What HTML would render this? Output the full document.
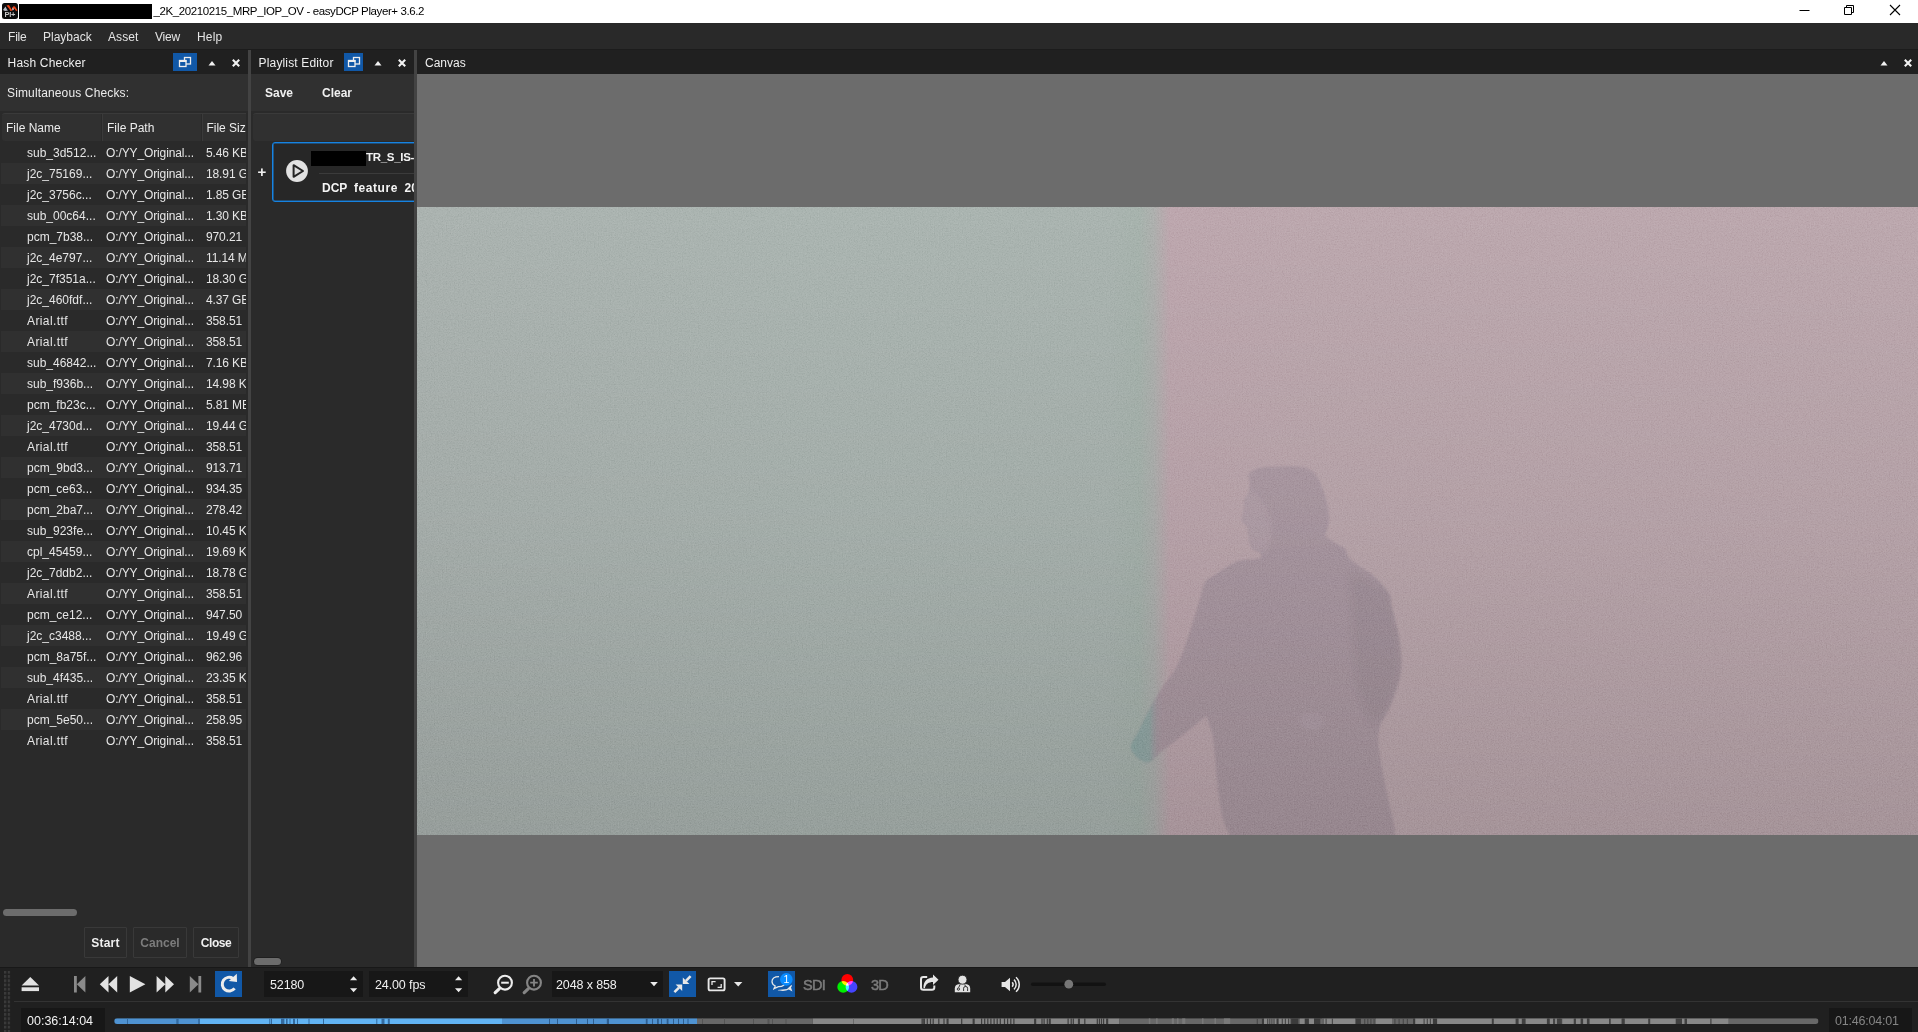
<!DOCTYPE html>
<html lang="en"><head><meta charset="utf-8"><title>easyDCP Player+ 3.6.2</title>
<style>
*{box-sizing:border-box;margin:0;padding:0}
html,body{width:1918px;height:1032px;overflow:hidden;background:#2a2a2a}
body{position:relative;font-family:"Liberation Sans",sans-serif;font-size:12px;color:#e8e8e8;line-height:1}
.abs,.abs *{position:absolute}
div,span,svg{position:absolute}
#title{left:0;top:0;width:1918px;height:23px;background:#fff}
#title .ttl{left:153.4px;top:5.5px;font-size:11.5px;color:#000;white-space:nowrap;letter-spacing:-0.39px}
#title .redact{left:19px;top:4px;width:132.5px;height:15px;background:#000}
#menu{left:0;top:23px;width:1918px;height:27px;background:#292929;border-bottom:1px solid #1c1c1c}
#menu span{top:8px;font-size:12px;color:#e4e4e4;white-space:nowrap}
.dockhead{top:50px;height:24px;background:#202020}
.dockhead .t{top:7px;font-size:12px;color:#efefef;white-space:nowrap}
.bluebtn{background:#1158a7}
.split{background:#434343}
#left{left:0;top:74px;width:248px;height:893px;background:#2a2a2a;overflow:hidden}
#left .top{left:0;top:0;width:248px;height:37px;background:#303030}
.row{left:1px;width:245.4px;height:21px;overflow:hidden;white-space:nowrap;font-size:12px;color:#e6e6e6}
.row.alt{background:#303030}
.row span{top:5px}
.row .c1{left:26px}.row .c2{left:105px;letter-spacing:-0.12px}.row .c3{left:205px;letter-spacing:-0.12px}
#lefttop{left:0;top:74px;width:248px;height:37px;background:#303030}
#lefttop span{left:7px;top:13px;letter-spacing:0.14px;font-size:12px;color:#ececec;white-space:nowrap}
#lhead{left:2px;top:113px;width:244px;height:28px;background:#303030;border-top:1px solid #3a3a3a;border-radius:3px 0 0 3px;overflow:hidden;white-space:nowrap}
#lhead span{top:8px;font-size:12px;color:#ececec}
#lhead i{position:absolute;top:-1px;width:2px;height:28px;background:#2a2a2a;border-right:1px solid #3a3a3a}
.hscroll{background:#6c6c6c;border-radius:4px}
.btn{border:1px solid #393939;border-radius:1px}
.btn span{left:0;right:0;top:9px;text-align:center;font-weight:bold;font-size:12px;color:#f0f0f0}
.btn.dis span{color:#7c7c7c}
#pltop{left:251px;top:74px;width:162.5px;height:37px;background:#303030}
#pltop span{top:13px;font-weight:bold;font-size:12px;color:#f0f0f0}
#plhead{left:253px;top:113px;width:160.5px;height:28px;background:#303030;border-top:1px solid #3a3a3a;border-radius:3px 0 0 3px}
#plclip{left:251px;top:111px;width:162.5px;height:840px;overflow:hidden}
#plclip .plus{left:6.6px;top:52.5px;font-weight:bold;font-size:15px;color:#f0f0f0}
.card{left:21px;top:31px;width:200px;height:60px;border:1px solid #1683e2;box-shadow:inset 0 0 0 0.6px rgba(22,131,226,0.85);border-radius:3px;background:#272727}
.card .redact2{left:38px;top:8px;width:55px;height:15px;background:#000}
.card .l1{left:93px;top:9px;font-weight:bold;font-size:11.5px;color:#f4f4f4;white-space:nowrap;letter-spacing:-0.3px}
.card .sep{left:46px;top:29.5px;width:200px;height:1px;background:#3b3b3b}
.card .l2{left:49px;top:39px;font-weight:bold;font-size:12px;color:#f4f4f4;white-space:nowrap}
#canvas{left:417px;top:74px;width:1501px;height:893px;background:#6c6c6c;overflow:hidden}
#frame{left:0;top:133px;width:1501px;height:628px;overflow:hidden;
  background:linear-gradient(90deg,#abb3b0 0px,#abb5b1 400px,#aab4b0 690px,#a7b3ad 722px,#aeb0ae 737px,#bda7ae 753px,#bca8ae 900px,#bca8ae 1501px)}
#frame .shade{left:0;top:0;width:1501px;height:628px;background:linear-gradient(180deg,rgba(0,0,0,0) 0%,rgba(0,0,0,0.045) 50%,rgba(0,0,0,0.118) 100%)}
#tb{left:0;top:967px;width:1918px;height:65px;background:#202020;border-top:1px solid #181818}
#tb>*{margin-top:-1px}
.box{background:#171717}
.box span{left:6px;top:8px;font-size:12.5px;letter-spacing:-0.12px;color:#f0f0f0;white-space:nowrap}
#tb .badge{left:783.4px;top:7px;font-size:10.5px;color:#fff}
#tb .dim{top:10.5px;font-size:14.5px;font-weight:normal;-webkit-text-stroke:0.5px #7c7c7c;color:#7c7c7c;letter-spacing:-0.7px}
#tb .hr{left:14px;top:34px;width:1904px;height:1px;background:#333}
#tb .tc{top:41px;height:24px;background:#171717}
#tb .tc span{top:7px;font-size:12.5px;white-space:nowrap}

</style></head>
<body>
<!-- ===== Title bar ===== -->
<div id="title">
  <svg style="left:2px;top:3px" width="16" height="16" viewBox="0 0 16 16">
    <rect x="0" y="0" width="16" height="16" rx="2.5" fill="#0c0c0c"/>
    <path d="M1 7 L3.5 3.5 L5 6.5 L6 7.5 L3 8 Z" fill="#b9bcc6"/>
    <path d="M4.5 2.5 L7 2 L9 5.5 L10.5 7.5 L8.5 8 L7 5.5 Z" fill="#f04316"/>
    <path d="M10 5 L11.5 3.2 L13 3.5 L15.5 7.5 L14 8 L12.5 5.5 L11 7 Z" fill="#f04316"/>
    <path d="M10 6 L11 4.5 L11.8 6.5 L10.8 7.5 Z" fill="#b9c6d6"/>
    <text x="2.6" y="14.2" font-family="Liberation Sans, sans-serif" font-size="7.5" font-weight="bold" fill="#c8c8c8" letter-spacing="-0.4">Pl+</text>
  </svg>
  <div class="redact"></div>
  <span class="ttl">_2K_20210215_MRP_IOP_OV - easyDCP Player+ 3.6.2</span>
  <svg style="left:1790px;top:0" width="128" height="23" viewBox="0 0 128 23">
    <path d="M9.5 10.5 H19.5" stroke="#000" stroke-width="1" fill="none"/>
    <path d="M54.5 7.5 H61.5 V14.5 H54.5 Z M56.5 7.5 V5.5 H63.5 V12.5 H61.5" stroke="#000" stroke-width="1" fill="none"/>
    <path d="M100 5 L110 15 M110 5 L100 15" stroke="#000" stroke-width="1.1" fill="none"/>
  </svg>
</div>

<!-- ===== Menu bar ===== -->
<div id="menu">
  <span style="left:8px;letter-spacing:-0.2px">File</span>
  <span style="left:43px">Playback</span>
  <span style="left:108px;letter-spacing:0.1px">Asset</span>
  <span style="left:155px;letter-spacing:-0.2px">View</span>
  <span style="left:197px;letter-spacing:0.2px">Help</span>
</div>

<!-- ===== Dock headers ===== -->
<div class="dockhead" style="left:0;width:248px">
  <span class="t" style="left:7.6px;letter-spacing:0.18px">Hash Checker</span>
  <div class="bluebtn" style="left:173px;top:3px;width:24px;height:18px"></div>
  <svg style="left:173px;top:3px" width="24" height="18" viewBox="0 0 24 18">
    <rect x="11.5" y="4.5" width="6" height="6.5" fill="none" stroke="#eee" stroke-width="1.3"/>
    <rect x="6.5" y="7.5" width="6.5" height="6" fill="#1158a7" stroke="#eee" stroke-width="1.3"/>
    <rect x="6" y="7" width="7.5" height="2" fill="#eee"/>
  </svg>
  <svg style="left:207px;top:9px" width="10" height="8" viewBox="0 0 10 8"><path d="M1.5 6.5 L5 2 L8.5 6.5 Z" fill="#f2f2f2"/></svg>
  <svg style="left:231px;top:8px" width="10" height="10" viewBox="0 0 10 10"><path d="M1.8 1.8 L8.2 8.2 M8.2 1.8 L1.8 8.2" stroke="#f2f2f2" stroke-width="2.1" fill="none"/></svg>
</div>
<div class="split" style="left:248px;top:50px;width:3px;height:917px"></div>
<div class="dockhead" style="left:251px;width:162.5px">
  <span class="t" style="left:7.6px;letter-spacing:0.15px">Playlist Editor</span>
  <div class="bluebtn" style="left:93px;top:3px;width:19px;height:18px"></div>
  <svg style="left:91px;top:3px" width="24" height="18" viewBox="0 0 24 18">
    <rect x="11.5" y="4.5" width="6" height="6.5" fill="none" stroke="#eee" stroke-width="1.3"/>
    <rect x="6.5" y="7.5" width="6.5" height="6" fill="#1158a7" stroke="#eee" stroke-width="1.3"/>
    <rect x="6" y="7" width="7.5" height="2" fill="#eee"/>
  </svg>
  <svg style="left:122px;top:9px" width="10" height="8" viewBox="0 0 10 8"><path d="M1.5 6.5 L5 2 L8.5 6.5 Z" fill="#f2f2f2"/></svg>
  <svg style="left:146px;top:8px" width="10" height="10" viewBox="0 0 10 10"><path d="M1.8 1.8 L8.2 8.2 M8.2 1.8 L1.8 8.2" stroke="#f2f2f2" stroke-width="2.1" fill="none"/></svg>
</div>
<div class="split" style="left:413.5px;top:50px;width:3.5px;height:917px"></div>
<div class="dockhead" style="left:417px;width:1501px">
  <span class="t" style="left:8px">Canvas</span>
  <svg style="left:1462px;top:9px" width="10" height="8" viewBox="0 0 10 8"><path d="M1.5 6.5 L5 2 L8.5 6.5 Z" fill="#f2f2f2"/></svg>
  <svg style="left:1486px;top:8px" width="10" height="10" viewBox="0 0 10 10"><path d="M1.8 1.8 L8.2 8.2 M8.2 1.8 L1.8 8.2" stroke="#f2f2f2" stroke-width="2.1" fill="none"/></svg>
</div>

<!-- ===== Hash Checker panel ===== -->
<div id="lefttop"><span>Simultaneous Checks:</span></div>
<div id="lhead">
  <span style="left:4px">File Name</span>
  <i style="left:99px"></i>
  <span style="left:105px">File Path</span>
  <i style="left:199px"></i>
  <span style="left:204.4px">File Size</span>
</div>
<div class="row" style="top:142px"><span class="c1">sub_3d512...</span><span class="c2">O:/YY_Original...</span><span class="c3">5.46 KB</span></div>
<div class="row alt" style="top:163px"><span class="c1">j2c_75169...</span><span class="c2">O:/YY_Original...</span><span class="c3">18.91 GB</span></div>
<div class="row" style="top:184px"><span class="c1">j2c_3756c...</span><span class="c2">O:/YY_Original...</span><span class="c3">1.85 GB</span></div>
<div class="row alt" style="top:205px"><span class="c1">sub_00c64...</span><span class="c2">O:/YY_Original...</span><span class="c3">1.30 KB</span></div>
<div class="row" style="top:226px"><span class="c1">pcm_7b38...</span><span class="c2">O:/YY_Original...</span><span class="c3">970.21 MB</span></div>
<div class="row alt" style="top:247px"><span class="c1">j2c_4e797...</span><span class="c2">O:/YY_Original...</span><span class="c3">11.14 MB</span></div>
<div class="row" style="top:268px"><span class="c1">j2c_7f351a...</span><span class="c2">O:/YY_Original...</span><span class="c3">18.30 GB</span></div>
<div class="row alt" style="top:289px"><span class="c1">j2c_460fdf...</span><span class="c2">O:/YY_Original...</span><span class="c3">4.37 GB</span></div>
<div class="row" style="top:310px"><span class="c1" style="letter-spacing:0.4px">Arial.ttf</span><span class="c2">O:/YY_Original...</span><span class="c3">358.51 KB</span></div>
<div class="row alt" style="top:331px"><span class="c1" style="letter-spacing:0.4px">Arial.ttf</span><span class="c2">O:/YY_Original...</span><span class="c3">358.51 KB</span></div>
<div class="row" style="top:352px"><span class="c1">sub_46842...</span><span class="c2">O:/YY_Original...</span><span class="c3">7.16 KB</span></div>
<div class="row alt" style="top:373px"><span class="c1">sub_f936b...</span><span class="c2">O:/YY_Original...</span><span class="c3">14.98 KB</span></div>
<div class="row" style="top:394px"><span class="c1">pcm_fb23c...</span><span class="c2">O:/YY_Original...</span><span class="c3">5.81 MB</span></div>
<div class="row alt" style="top:415px"><span class="c1">j2c_4730d...</span><span class="c2">O:/YY_Original...</span><span class="c3">19.44 GB</span></div>
<div class="row" style="top:436px"><span class="c1" style="letter-spacing:0.4px">Arial.ttf</span><span class="c2">O:/YY_Original...</span><span class="c3">358.51 KB</span></div>
<div class="row alt" style="top:457px"><span class="c1">pcm_9bd3...</span><span class="c2">O:/YY_Original...</span><span class="c3">913.71 MB</span></div>
<div class="row" style="top:478px"><span class="c1">pcm_ce63...</span><span class="c2">O:/YY_Original...</span><span class="c3">934.35 MB</span></div>
<div class="row alt" style="top:499px"><span class="c1">pcm_2ba7...</span><span class="c2">O:/YY_Original...</span><span class="c3">278.42 MB</span></div>
<div class="row" style="top:520px"><span class="c1">sub_923fe...</span><span class="c2">O:/YY_Original...</span><span class="c3">10.45 KB</span></div>
<div class="row alt" style="top:541px"><span class="c1">cpl_45459...</span><span class="c2">O:/YY_Original...</span><span class="c3">19.69 KB</span></div>
<div class="row" style="top:562px"><span class="c1">j2c_7ddb2...</span><span class="c2">O:/YY_Original...</span><span class="c3">18.78 GB</span></div>
<div class="row alt" style="top:583px"><span class="c1" style="letter-spacing:0.4px">Arial.ttf</span><span class="c2">O:/YY_Original...</span><span class="c3">358.51 KB</span></div>
<div class="row" style="top:604px"><span class="c1">pcm_ce12...</span><span class="c2">O:/YY_Original...</span><span class="c3">947.50 MB</span></div>
<div class="row alt" style="top:625px"><span class="c1">j2c_c3488...</span><span class="c2">O:/YY_Original...</span><span class="c3">19.49 GB</span></div>
<div class="row" style="top:646px"><span class="c1">pcm_8a75f...</span><span class="c2">O:/YY_Original...</span><span class="c3">962.96 MB</span></div>
<div class="row alt" style="top:667px"><span class="c1">sub_4f435...</span><span class="c2">O:/YY_Original...</span><span class="c3">23.35 KB</span></div>
<div class="row" style="top:688px"><span class="c1" style="letter-spacing:0.4px">Arial.ttf</span><span class="c2">O:/YY_Original...</span><span class="c3">358.51 KB</span></div>
<div class="row alt" style="top:709px"><span class="c1">pcm_5e50...</span><span class="c2">O:/YY_Original...</span><span class="c3">258.95 MB</span></div>
<div class="row" style="top:730px"><span class="c1" style="letter-spacing:0.4px">Arial.ttf</span><span class="c2">O:/YY_Original...</span><span class="c3">358.51 KB</span></div>
<div class="hscroll" style="left:3px;top:908.6px;width:74px;height:7px"></div>
<div class="btn" style="left:84px;top:927px;width:43px;height:31px"><span style="letter-spacing:0.2px">Start</span></div>
<div class="btn dis" style="left:133px;top:927px;width:54px;height:31px"><span>Cancel</span></div>
<div class="btn" style="left:193px;top:927px;width:46px;height:31px"><span style="letter-spacing:-0.45px">Close</span></div>

<!-- ===== Playlist Editor panel ===== -->
<div id="pltop">
  <span style="left:14px">Save</span>
  <span style="left:71px">Clear</span>
</div>
<div id="plhead"></div>
<div id="plclip">
  <span class="plus">+</span>
  <div class="card">
    <svg style="left:11.5px;top:15.6px" width="24" height="24" viewBox="0 0 24 24">
      <circle cx="12" cy="12" r="10.9" fill="#e2e2e2"/>
      <path d="M8.6 6.2 L8.6 17.8 L18 12 Z" fill="#dcdcdc" stroke="#242424" stroke-width="2" stroke-linejoin="round"/>
    </svg>
    <div class="redact2"></div>
    <span class="l1">TR_S_IS-1_2K_20210215_MRP_IOP_OV</span>
    <div class="sep"></div>
    <span class="l2">DCP&nbsp; <span style="position:static;letter-spacing:0.55px">feature</span>&nbsp; 2048 x 858&nbsp; 24.00 fps</span>
  </div>
</div>
<div class="hscroll" style="left:253.6px;top:957.5px;width:27.5px;height:7px;box-shadow:0 0 0 0.7px #1c1c1c"></div>

<!-- ===== Canvas ===== -->
<div id="canvas">
  <div id="frame">
    <svg style="left:0;top:0" width="1501" height="628" viewBox="0 0 1501 628"><defs><filter id="fb" x="-10%" y="-10%" width="120%" height="120%"><feGaussianBlur stdDeviation="1.3"/></filter><filter id="fb2" x="-20%" y="-20%" width="140%" height="140%"><feGaussianBlur stdDeviation="5"/></filter><filter id="fb3" x="-20%" y="-20%" width="140%" height="140%"><feGaussianBlur stdDeviation="1.6"/></filter><linearGradient id="fg" x1="0" y1="0" x2="0" y2="1"><stop offset="0" stop-color="#ad9ba5"/><stop offset="0.35" stop-color="#ab99a3"/><stop offset="1" stop-color="#ab99a2"/></linearGradient><linearGradient id="hg" gradientUnits="userSpaceOnUse" x1="716" y1="0" x2="746" y2="0"><stop offset="0" stop-color="#90a9a6"/><stop offset="0.55" stop-color="#94a8a6"/><stop offset="1" stop-color="#ab99a3" stop-opacity="0"/></linearGradient><clipPath id="fc"><path d="M831.6 267.7 C832.5 266.1 835.0 264.0 837.4 262.8 C839.7 261.5 841.5 260.8 845.6 260.3 C849.8 259.7 856.6 259.7 862.1 259.5 C867.6 259.3 874.2 258.9 878.6 259.2 C883.0 259.4 885.5 259.8 888.5 260.8 C891.5 261.8 894.5 263.3 896.7 265.3 C898.9 267.2 900.1 269.8 901.7 272.7 C903.2 275.5 904.5 279.3 905.8 282.5 C907.0 285.8 908.2 289.1 909.1 292.4 C910.0 295.7 910.7 298.5 911.2 302.3 C911.7 306.2 912.1 311.9 911.9 315.5 C911.6 319.1 910.5 321.6 909.9 323.8 C909.3 326.0 907.7 327.2 908.2 328.7 C908.8 330.2 911.3 331.4 913.2 332.8 C915.1 334.2 917.6 335.7 919.8 336.9 C922.0 338.2 924.7 338.9 926.4 340.2 C928.0 341.6 928.7 343.4 929.6 345.2 C930.6 346.9 930.2 348.7 932.1 350.9 C934.1 353.1 937.2 355.5 941.2 358.3 C945.2 361.2 952.2 365.2 956.0 368.2 C959.9 371.2 961.9 374.0 964.3 376.5 C966.6 379.0 968.4 380.6 970.0 383.1 C971.7 385.5 973.4 388.8 974.2 391.3 C974.9 393.7 973.3 391.8 974.5 397.8 C975.8 403.7 979.8 417.5 981.5 426.8 C983.2 436.2 984.5 446.2 984.6 454.0 C984.7 461.7 984.2 465.6 982.3 473.4 C980.4 481.1 976.2 492.7 973.0 500.5 C969.8 508.3 964.7 512.8 962.9 519.9 C961.1 527.0 961.1 532.8 962.1 543.1 C963.2 553.5 966.7 569.6 969.1 581.9 C971.6 594.2 975.3 608.4 976.9 616.8 C978.4 625.2 978.2 629.7 978.4 632.3 C978.7 634.9 1005.7 632.3 978.4 632.3 C951.1 632.3 842.1 632.3 814.8 632.3 C787.5 632.3 816.2 635.5 814.8 632.3 C813.4 629.1 808.6 621.3 806.3 612.9 C804.0 604.5 802.1 591.6 800.9 581.9 C799.6 572.2 799.4 563.8 798.5 554.8 C797.6 545.7 797.0 535.3 795.4 527.6 C793.9 520.0 790.3 512.1 789.2 509.0 C788.2 505.9 794.0 505.2 789.2 509.0 C784.4 512.9 767.9 526.5 760.5 532.3 C753.2 538.1 750.2 540.0 745.0 543.9 C739.9 547.8 734.7 555.9 729.5 555.6 C724.4 555.2 715.3 547.3 714.0 542.0 C712.7 536.7 718.5 530.7 721.8 523.8 C725.0 516.9 729.5 507.6 733.4 500.5 C737.3 493.4 740.5 488.2 745.0 481.1 C749.6 474.0 756.0 466.9 760.5 457.9 C765.1 448.8 768.6 437.2 772.2 426.8 C775.7 416.5 779.2 404.4 781.9 395.8 C784.5 387.2 785.6 379.6 788.0 375.1 C790.4 370.7 793.5 371.0 796.2 369.0 C798.9 367.1 801.7 365.4 804.4 363.6 C807.2 361.8 809.7 360.0 812.7 358.3 C815.7 356.7 818.2 354.8 822.6 353.7 C827.0 352.6 835.5 352.3 839.0 351.7 C842.6 351.1 843.4 351.2 844.0 350.1 C844.6 349.1 843.6 346.6 842.7 345.5 C841.7 344.4 839.7 344.4 838.2 343.5 C836.8 342.7 835.1 341.7 834.1 340.2 C833.2 338.7 833.0 336.4 832.5 334.5 C832.0 332.5 831.4 330.5 831.1 328.7 C830.9 326.9 831.0 325.3 830.8 323.8 C830.6 322.2 830.7 320.5 830.0 319.1 C829.2 317.8 827.0 316.8 826.2 315.5 C825.4 314.2 825.0 313.0 825.0 311.4 C825.0 309.7 825.9 307.7 826.2 305.6 C826.6 303.6 827.0 301.2 827.2 299.0 C827.4 296.8 826.9 294.4 827.5 292.4 C828.1 290.5 830.0 289.4 830.8 287.5 C831.6 285.6 832.2 283.4 832.5 280.9 C832.7 278.4 832.6 274.9 832.5 272.7 C832.3 270.5 830.8 269.3 831.6 267.7 Z"/></clipPath></defs><g filter="url(#fb)"><path d="M831.6 267.7 C832.5 266.1 835.0 264.0 837.4 262.8 C839.7 261.5 841.5 260.8 845.6 260.3 C849.8 259.7 856.6 259.7 862.1 259.5 C867.6 259.3 874.2 258.9 878.6 259.2 C883.0 259.4 885.5 259.8 888.5 260.8 C891.5 261.8 894.5 263.3 896.7 265.3 C898.9 267.2 900.1 269.8 901.7 272.7 C903.2 275.5 904.5 279.3 905.8 282.5 C907.0 285.8 908.2 289.1 909.1 292.4 C910.0 295.7 910.7 298.5 911.2 302.3 C911.7 306.2 912.1 311.9 911.9 315.5 C911.6 319.1 910.5 321.6 909.9 323.8 C909.3 326.0 907.7 327.2 908.2 328.7 C908.8 330.2 911.3 331.4 913.2 332.8 C915.1 334.2 917.6 335.7 919.8 336.9 C922.0 338.2 924.7 338.9 926.4 340.2 C928.0 341.6 928.7 343.4 929.6 345.2 C930.6 346.9 930.2 348.7 932.1 350.9 C934.1 353.1 937.2 355.5 941.2 358.3 C945.2 361.2 952.2 365.2 956.0 368.2 C959.9 371.2 961.9 374.0 964.3 376.5 C966.6 379.0 968.4 380.6 970.0 383.1 C971.7 385.5 973.4 388.8 974.2 391.3 C974.9 393.7 973.3 391.8 974.5 397.8 C975.8 403.7 979.8 417.5 981.5 426.8 C983.2 436.2 984.5 446.2 984.6 454.0 C984.7 461.7 984.2 465.6 982.3 473.4 C980.4 481.1 976.2 492.7 973.0 500.5 C969.8 508.3 964.7 512.8 962.9 519.9 C961.1 527.0 961.1 532.8 962.1 543.1 C963.2 553.5 966.7 569.6 969.1 581.9 C971.6 594.2 975.3 608.4 976.9 616.8 C978.4 625.2 978.2 629.7 978.4 632.3 C978.7 634.9 1005.7 632.3 978.4 632.3 C951.1 632.3 842.1 632.3 814.8 632.3 C787.5 632.3 816.2 635.5 814.8 632.3 C813.4 629.1 808.6 621.3 806.3 612.9 C804.0 604.5 802.1 591.6 800.9 581.9 C799.6 572.2 799.4 563.8 798.5 554.8 C797.6 545.7 797.0 535.3 795.4 527.6 C793.9 520.0 790.3 512.1 789.2 509.0 C788.2 505.9 794.0 505.2 789.2 509.0 C784.4 512.9 767.9 526.5 760.5 532.3 C753.2 538.1 750.2 540.0 745.0 543.9 C739.9 547.8 734.7 555.9 729.5 555.6 C724.4 555.2 715.3 547.3 714.0 542.0 C712.7 536.7 718.5 530.7 721.8 523.8 C725.0 516.9 729.5 507.6 733.4 500.5 C737.3 493.4 740.5 488.2 745.0 481.1 C749.6 474.0 756.0 466.9 760.5 457.9 C765.1 448.8 768.6 437.2 772.2 426.8 C775.7 416.5 779.2 404.4 781.9 395.8 C784.5 387.2 785.6 379.6 788.0 375.1 C790.4 370.7 793.5 371.0 796.2 369.0 C798.9 367.1 801.7 365.4 804.4 363.6 C807.2 361.8 809.7 360.0 812.7 358.3 C815.7 356.7 818.2 354.8 822.6 353.7 C827.0 352.6 835.5 352.3 839.0 351.7 C842.6 351.1 843.4 351.2 844.0 350.1 C844.6 349.1 843.6 346.6 842.7 345.5 C841.7 344.4 839.7 344.4 838.2 343.5 C836.8 342.7 835.1 341.7 834.1 340.2 C833.2 338.7 833.0 336.4 832.5 334.5 C832.0 332.5 831.4 330.5 831.1 328.7 C830.9 326.9 831.0 325.3 830.8 323.8 C830.6 322.2 830.7 320.5 830.0 319.1 C829.2 317.8 827.0 316.8 826.2 315.5 C825.4 314.2 825.0 313.0 825.0 311.4 C825.0 309.7 825.9 307.7 826.2 305.6 C826.6 303.6 827.0 301.2 827.2 299.0 C827.4 296.8 826.9 294.4 827.5 292.4 C828.1 290.5 830.0 289.4 830.8 287.5 C831.6 285.6 832.2 283.4 832.5 280.9 C832.7 278.4 832.6 274.9 832.5 272.7 C832.3 270.5 830.8 269.3 831.6 267.7 Z" fill="url(#fg)"/><g clip-path="url(#fc)"><rect x="700" y="480" width="48" height="90" fill="url(#hg)"/><path d="M832.5 281.7 L830.8 287.5 L827.5 292.4 L826.2 305.6 L825.0 311.4 L826.2 315.5 L830.0 319.1 L831.1 328.7 L834.1 340.2 L842.7 345.5 L851.4 341.9 L855.5 328.7 L854.2 315.5 L849.8 300.7 L841.5 288.3 Z" fill="#b7a5ad" opacity="0.5" filter="url(#fb3)"/><ellipse cx="849.7" cy="434.6" rx="45" ry="80" fill="#b2a0a8" opacity="0.0"/><path d="M931.1 360.9 L971.8 384.2 L983.5 434.6 L983.5 465.6 L969.9 504.4 L954.4 519.9 L938.9 481.1 L935.0 419.1 Z" fill="#000" opacity="0.035" filter="url(#fb2)"/><ellipse cx="894.3" cy="514.1" rx="12" ry="9" fill="#b8a7ae" opacity="0.35"/></g></g></svg>
    <div class="shade"></div>
    <svg style="left:0;top:0;mix-blend-mode:soft-light;opacity:0.24" width="1501" height="628" viewBox="0 0 1501 628">
      <defs><filter id="grain" x="0" y="0" width="100%" height="100%" color-interpolation-filters="sRGB">
        <feTurbulence type="fractalNoise" baseFrequency="0.75" numOctaves="2" seed="11" result="n"/>
        <feColorMatrix in="n" type="matrix" values="0.6 0.6 0.6 0 -0.4  0.6 0.6 0.6 0 -0.4  0.6 0.6 0.6 0 -0.4  0 0 0 0 1"/>
      </filter></defs>
      <rect x="0" y="0" width="1501" height="628" filter="url(#grain)"/>
    </svg>
  </div>
</div>

<!-- ===== Bottom toolbar ===== -->
<div id="tb">
  <svg id="grip" style="left:0;top:0" width="14" height="65" viewBox="0 967 14 65"><defs><pattern id="gp" x="3.9" y="970.9" width="3.9" height="4.22" patternUnits="userSpaceOnUse"><rect x="0" y="0" width="2.3" height="2.8" fill="#3b3b3b"/></pattern></defs><rect x="3.9" y="970.9" width="6.4" height="62" fill="url(#gp)"/></svg>
  <div class="box" style="left:264px;top:4px;width:99px;height:26px"><span>52180</span></div>
  <div class="box" style="left:369px;top:4px;width:99px;height:26px"><span>24.00 fps</span></div>
  <div class="box" style="left:552px;top:4px;width:111px;height:26px"><span style="left:4px">2048 x 858</span></div>
  <svg id="tbicons" style="left:0;top:0" width="1918" height="37" viewBox="0 967 1918 37">
    <!-- eject -->
    <path d="M21.6 985.6 L30.3 977 L39 985.6 Z" fill="#e2e2e2"/>
    <rect x="21.6" y="987.3" width="17.4" height="3.8" fill="#e2e2e2"/>
    <!-- skip to start -->
    <rect x="74" y="976" width="2.8" height="16.5" fill="#8a8a8a"/>
    <path d="M85.4 976 L85.4 992.5 L76.8 984.25 Z" fill="#8a8a8a"/>
    <!-- rewind -->
    <path d="M108.5 976 L108.5 992.5 L99.8 984.25 Z M117.2 976 L117.2 992.5 L108.5 984.25 Z" fill="#e2e2e2"/>
    <!-- play -->
    <path d="M129.8 976 L145.4 984.25 L129.8 992.5 Z" fill="#e2e2e2"/>
    <!-- ff -->
    <path d="M156.6 976 L165.3 984.25 L156.6 992.5 Z M165.3 976 L174 984.25 L165.3 992.5 Z" fill="#e2e2e2"/>
    <!-- skip to end -->
    <path d="M189.8 976 L198.4 984.25 L189.8 992.5 Z" fill="#8a8a8a"/>
    <rect x="198.4" y="976" width="2.8" height="16.5" fill="#8a8a8a"/>
    <!-- loop -->
    <rect x="215" y="971" width="27" height="26" fill="#1158a7"/>
    <path d="M234.6 988.4 A6.9 6.9 0 1 1 233 978.4" fill="none" stroke="#ececec" stroke-width="3"/>
    <path d="M228.8 981 L237 982 L236.8 973.8 Z" fill="#ececec"/>
    <!-- zoom out -->
    <circle cx="505" cy="982.7" r="6.9" fill="none" stroke="#ececec" stroke-width="2.1"/>
    <path d="M499.4 988.6 L495.2 992.6" stroke="#ececec" stroke-width="3.2" stroke-linecap="round"/>
    <path d="M501.2 982.7 H508.8" stroke="#ececec" stroke-width="2"/>
    <!-- zoom in (disabled) -->
    <circle cx="534" cy="982.7" r="6.9" fill="none" stroke="#858585" stroke-width="2.1"/>
    <path d="M528.4 988.6 L524.2 992.6" stroke="#858585" stroke-width="3.2" stroke-linecap="round"/>
    <path d="M530.2 982.7 H537.8 M534 978.9 V986.5" stroke="#858585" stroke-width="1.8"/>
    <!-- fit button -->
    <rect x="669" y="971" width="27" height="26" fill="#1158a7"/>
    <path d="M674.4 992.2 L679 987.6" stroke="#e8e8e8" stroke-width="2.6"/>
    <path d="M675.6 984.4 L682.2 984.4 L682.2 991 Z" fill="#e8e8e8"/>
    <path d="M690.6 976.2 L686 980.8" stroke="#e8e8e8" stroke-width="2.6"/>
    <path d="M682.8 977.4 L682.8 984 L689.4 984 Z" fill="#e8e8e8"/>
    <!-- aspect -->
    <rect x="708.6" y="978.4" width="16" height="12" rx="1.6" fill="none" stroke="#e8e8e8" stroke-width="1.9"/>
    <path d="M712 985 V981.6 H715.6 M721.2 984 V987.4 H717.6" fill="none" stroke="#e8e8e8" stroke-width="1.3"/>
    <path d="M734 982 L742.4 982 L738.2 986.4 Z" fill="#e8e8e8"/>
    <!-- subtitle button -->
    <rect x="768" y="971" width="27" height="26" fill="#1158a7"/>
    <path d="M779 976.6 C774 976.6 772 979.2 772 981.6 C772 983.6 773.4 985.2 775.2 986 L774 988.6 L778.4 986.6 C783 986.8 785.6 984.4 785.6 981.6" fill="none" stroke="#e6e6e6" stroke-width="1.3"/>
    <path d="M777.6 990 C780 991.2 786 991.4 788.8 989.6 L792.4 991.6 L791 987.6 C792 986.6 792 985.6 791.6 984.8 L787 989 Z" fill="#e6e6e6"/>
    <circle cx="786.3" cy="979.4" r="6.3" fill="#0a8cff"/>
    <!-- RGB -->
    <g style="isolation:isolate">
      <circle cx="847.3" cy="979.9" r="5.9" fill="#ff0000"/>
      <circle cx="843.2" cy="986.9" r="5.9" fill="#00ee00" style="mix-blend-mode:screen"/>
      <circle cx="851.5" cy="986.9" r="5.9" fill="#4444ff" style="mix-blend-mode:screen"/>
    </g>
    <!-- export -->
    <path d="M927.2 977.1 H923.3 Q921 977.1 921 979.4 V987.5 Q921 989.8 923.3 989.8 H932 Q934.3 989.8 934.3 987.5 V985.6" fill="none" stroke="#e6e6e6" stroke-width="2"/>
    <path d="M923.5 988.2 C923.2 981.4 926.8 978 933 977.5 L933 974.4 L938.5 979.8 L933 985 L933 982 C928.8 982.1 925.6 983.9 924.9 988.2 Z" fill="#e6e6e6"/>
    <!-- doctor -->
        <path d="M954.8 992.2 V988.6 Q954.8 984.4 959.4 984 H965.6 Q970.2 984.4 970.2 988.6 V992.2 Z" fill="#e2e2e2"/>
    <circle cx="962.5" cy="979.7" r="4.5" fill="#e2e2e2" stroke="#202020" stroke-width="0.9"/>
    <path d="M960.2 984.2 L958.7 987.6" stroke="#202020" stroke-width="0.9" fill="none"/>
    <circle cx="958.4" cy="989.1" r="1.15" fill="none" stroke="#202020" stroke-width="0.9"/>
    <path d="M963.6 991 V988.2 Q963.6 986.5 965.6 986.5 Q967.6 986.5 967.6 988.2 V991" fill="none" stroke="#202020" stroke-width="0.9"/>
    <path d="M964.8 984.2 L965.4 986.4" stroke="#202020" stroke-width="0.9" fill="none"/>
    <!-- speaker -->
    <path d="M1001.6 982 H1005 L1010 977.8 V991.2 L1005 987 H1001.6 Z" fill="#e6e6e6"/>
    <path d="M1012.2 982.3 A3.4 3.4 0 0 1 1012.2 986.7" fill="none" stroke="#e6e6e6" stroke-width="1.5"/>
    <path d="M1014 979.6 A6.6 6.6 0 0 1 1014 989.4" fill="none" stroke="#e6e6e6" stroke-width="1.5"/>
    <path d="M1016 977.2 A9.8 9.8 0 0 1 1016 991.8" fill="none" stroke="#e6e6e6" stroke-width="1.5"/>
    <!-- volume slider -->
    <rect x="1031" y="982.4" width="75" height="3.6" rx="1.8" fill="#121212"/>
    <circle cx="1068.8" cy="984.2" r="4.4" fill="#767676"/>
    <!-- spin arrows -->
    <path d="M350 980.2 L353.6 976.2 L357.2 980.2 Z M350 988.2 L357.2 988.2 L353.6 992.2 Z" fill="#ececec"/>
    <path d="M455 980.2 L458.6 976.2 L462.2 980.2 Z M455 988.2 L462.2 988.2 L458.6 992.2 Z" fill="#ececec"/>
    <path d="M650.2 982 L657.8 982 L654 986.2 Z" fill="#ececec"/>
  </svg>
  <span class="badge">1</span>
  <span class="dim" style="left:803px">SDI</span>
  <span class="dim" style="left:871px">3D</span>
  <div class="hr"></div>
  <div class="tc" style="left:21px;width:84px"><span style="left:6px;color:#f2f2f2">00:36:14:04</span></div>
  <div class="tc" style="left:1829px;width:83px"><span style="left:6px;color:#858585;letter-spacing:-0.2px">01:46:04:01</span></div>
  <svg style="left:0;top:49px" width="1918" height="10" viewBox="0 1016 1918 10"><defs><clipPath id="tlc"><rect x="114.2" y="1018.2" width="1704.3" height="5.8" rx="2.9"/></clipPath></defs><g clip-path="url(#tlc)"><rect x="114.2" y="1018.2" width="85.8" height="5.8" fill="#4f93d2"/><rect x="200.0" y="1018.2" width="302.0" height="5.8" fill="#62b4f4"/><rect x="502.0" y="1018.2" width="195.0" height="5.8" fill="#4f93d2"/><rect x="697.0" y="1018.2" width="115.6" height="5.8" fill="#686868"/><rect x="812.6" y="1018.2" width="307.0" height="5.8" fill="#888888"/><rect x="1119.6" y="1018.2" width="136.4" height="5.8" fill="#686868"/><rect x="1256.0" y="1018.2" width="8.0" height="5.8" fill="#686868"/><rect x="1264.0" y="1018.2" width="26.0" height="5.8" fill="#888888"/><rect x="1290.0" y="1018.2" width="10.0" height="5.8" fill="#686868"/><rect x="1300.0" y="1018.2" width="14.0" height="5.8" fill="#888888"/><rect x="1314.0" y="1018.2" width="8.0" height="5.8" fill="#686868"/><rect x="1322.0" y="1018.2" width="33.0" height="5.8" fill="#888888"/><rect x="1355.0" y="1018.2" width="21.0" height="5.8" fill="#686868"/><rect x="1376.0" y="1018.2" width="16.0" height="5.8" fill="#888888"/><rect x="1392.0" y="1018.2" width="23.0" height="5.8" fill="#686868"/><rect x="1415.0" y="1018.2" width="25.0" height="5.8" fill="#888888"/><rect x="1440.0" y="1018.2" width="288.8" height="5.8" fill="#888888"/><rect x="1728.8" y="1018.2" width="89.7" height="5.8" fill="#686868"/><rect x="127.0" y="1018.2" width="1.0" height="5.8" fill="#336a9f"/><rect x="176.3" y="1018.2" width="2.3" height="5.8" fill="#336a9f"/><rect x="198.2" y="1018.2" width="1.6" height="5.8" fill="#336a9f"/><rect x="269.3" y="1018.2" width="1.0" height="5.8" fill="#336a9f"/><rect x="271.0" y="1018.2" width="1.0" height="5.8" fill="#336a9f"/><rect x="281.0" y="1018.2" width="3.4" height="5.8" fill="#336a9f"/><rect x="286.0" y="1018.2" width="1.6" height="5.8" fill="#336a9f"/><rect x="289.5" y="1018.2" width="1.0" height="5.8" fill="#336a9f"/><rect x="293.0" y="1018.2" width="2.0" height="5.8" fill="#336a9f"/><rect x="297.0" y="1018.2" width="1.0" height="5.8" fill="#336a9f"/><rect x="308.5" y="1018.2" width="1.0" height="5.8" fill="#336a9f"/><rect x="323.0" y="1018.2" width="1.0" height="5.8" fill="#336a9f"/><rect x="376.3" y="1018.2" width="1.0" height="5.8" fill="#336a9f"/><rect x="381.5" y="1018.2" width="3.0" height="5.8" fill="#336a9f"/><rect x="387.8" y="1018.2" width="2.0" height="5.8" fill="#336a9f"/><rect x="549.0" y="1018.2" width="1.0" height="5.8" fill="#2f5f90"/><rect x="557.0" y="1018.2" width="1.0" height="5.8" fill="#2f5f90"/><rect x="576.0" y="1018.2" width="1.0" height="5.8" fill="#2f5f90"/><rect x="587.0" y="1018.2" width="1.0" height="5.8" fill="#2f5f90"/><rect x="593.0" y="1018.2" width="1.0" height="5.8" fill="#2f5f90"/><rect x="606.8" y="1018.2" width="2.2" height="5.8" fill="#2f5f90"/><rect x="645.8" y="1018.2" width="1.8" height="5.8" fill="#2f5f90"/><rect x="652.0" y="1018.2" width="1.0" height="5.8" fill="#2f5f90"/><rect x="657.0" y="1018.2" width="1.8" height="5.8" fill="#2f5f90"/><rect x="661.0" y="1018.2" width="1.0" height="5.8" fill="#2f5f90"/><rect x="666.7" y="1018.2" width="1.8" height="5.8" fill="#2f5f90"/><rect x="673.0" y="1018.2" width="1.0" height="5.8" fill="#2f5f90"/><rect x="678.0" y="1018.2" width="1.0" height="5.8" fill="#2f5f90"/><rect x="683.0" y="1018.2" width="1.0" height="5.8" fill="#2f5f90"/><rect x="687.5" y="1018.2" width="1.0" height="5.8" fill="#2f5f90"/><rect x="702.0" y="1018.2" width="1.0" height="5.8" fill="#555"/><rect x="724.0" y="1018.2" width="1.0" height="5.8" fill="#555"/><rect x="753.0" y="1018.2" width="1.0" height="5.8" fill="#555"/><rect x="767.5" y="1018.2" width="2.0" height="5.8" fill="#555"/><rect x="772.0" y="1018.2" width="1.0" height="5.8" fill="#555"/><rect x="785.5" y="1018.2" width="1.0" height="5.8" fill="#555"/><rect x="853.0" y="1018.2" width="1.0" height="5.8" fill="#6a6a6a"/><rect x="921.5" y="1018.2" width="1.2" height="5.8" fill="#3e3e3e"/><rect x="922.6" y="1018.2" width="1.2" height="5.8" fill="#3e3e3e"/><rect x="923.8" y="1018.2" width="1.2" height="5.8" fill="#3e3e3e"/><rect x="926.7" y="1018.2" width="1.2" height="5.8" fill="#3e3e3e"/><rect x="929.9" y="1018.2" width="1.2" height="5.8" fill="#3e3e3e"/><rect x="932.6" y="1018.2" width="1.2" height="5.8" fill="#3e3e3e"/><rect x="938.2" y="1018.2" width="1.2" height="5.8" fill="#3e3e3e"/><rect x="943.4" y="1018.2" width="1.2" height="5.8" fill="#3e3e3e"/><rect x="946.5" y="1018.2" width="2.1" height="5.8" fill="#3e3e3e"/><rect x="961.1" y="1018.2" width="1.2" height="5.8" fill="#3e3e3e"/><rect x="972.6" y="1018.2" width="2.1" height="5.8" fill="#3e3e3e"/><rect x="981.0" y="1018.2" width="1.2" height="5.8" fill="#3e3e3e"/><rect x="984.1" y="1018.2" width="1.2" height="5.8" fill="#3e3e3e"/><rect x="987.2" y="1018.2" width="1.2" height="5.8" fill="#3e3e3e"/><rect x="990.3" y="1018.2" width="1.2" height="5.8" fill="#3e3e3e"/><rect x="993.5" y="1018.2" width="1.2" height="5.8" fill="#3e3e3e"/><rect x="996.6" y="1018.2" width="1.2" height="5.8" fill="#3e3e3e"/><rect x="999.7" y="1018.2" width="1.2" height="5.8" fill="#3e3e3e"/><rect x="1003.9" y="1018.2" width="1.2" height="5.8" fill="#3e3e3e"/><rect x="1007.0" y="1018.2" width="1.2" height="5.8" fill="#3e3e3e"/><rect x="1010.2" y="1018.2" width="1.2" height="5.8" fill="#3e3e3e"/><rect x="1013.3" y="1018.2" width="1.2" height="5.8" fill="#3e3e3e"/><rect x="1034.1" y="1018.2" width="2.1" height="5.8" fill="#3e3e3e"/><rect x="1041.4" y="1018.2" width="1.2" height="5.8" fill="#3e3e3e"/><rect x="1043.5" y="1018.2" width="1.2" height="5.8" fill="#3e3e3e"/><rect x="1046.7" y="1018.2" width="1.2" height="5.8" fill="#3e3e3e"/><rect x="1048.7" y="1018.2" width="2.1" height="5.8" fill="#3e3e3e"/><rect x="1067.5" y="1018.2" width="1.2" height="5.8" fill="#3e3e3e"/><rect x="1070.6" y="1018.2" width="1.2" height="5.8" fill="#3e3e3e"/><rect x="1072.7" y="1018.2" width="1.2" height="5.8" fill="#3e3e3e"/><rect x="1077.9" y="1018.2" width="2.1" height="5.8" fill="#3e3e3e"/><rect x="1084.2" y="1018.2" width="1.2" height="5.8" fill="#3e3e3e"/><rect x="1096.7" y="1018.2" width="1.2" height="5.8" fill="#3e3e3e"/><rect x="1098.8" y="1018.2" width="1.2" height="5.8" fill="#3e3e3e"/><rect x="1100.9" y="1018.2" width="1.2" height="5.8" fill="#3e3e3e"/><rect x="1103.0" y="1018.2" width="1.2" height="5.8" fill="#3e3e3e"/><rect x="1106.1" y="1018.2" width="2.1" height="5.8" fill="#3e3e3e"/><rect x="1148.8" y="1018.2" width="1.5" height="5.8" fill="#7a7a7a"/><rect x="1156.1" y="1018.2" width="1.5" height="5.8" fill="#7a7a7a"/><rect x="1171.8" y="1018.2" width="2.1" height="5.8" fill="#7a7a7a"/><rect x="1177.0" y="1018.2" width="1.5" height="5.8" fill="#7a7a7a"/><rect x="1182.2" y="1018.2" width="3.1" height="5.8" fill="#7a7a7a"/><rect x="1202.0" y="1018.2" width="1.5" height="5.8" fill="#7a7a7a"/><rect x="1214.5" y="1018.2" width="1.5" height="5.8" fill="#7a7a7a"/><rect x="1223.9" y="1018.2" width="6.3" height="5.8" fill="#7a7a7a"/><rect x="1256.7" y="1018.2" width="1.2" height="5.8" fill="#4a4a4a"/><rect x="1261.9" y="1018.2" width="2.1" height="5.8" fill="#3c3c3c"/><rect x="1267.1" y="1018.2" width="1.2" height="5.8" fill="#4a4a4a"/><rect x="1269.2" y="1018.2" width="1.2" height="5.8" fill="#4a4a4a"/><rect x="1271.3" y="1018.2" width="1.2" height="5.8" fill="#4a4a4a"/><rect x="1273.4" y="1018.2" width="1.2" height="5.8" fill="#4a4a4a"/><rect x="1276.5" y="1018.2" width="2.1" height="5.8" fill="#3c3c3c"/><rect x="1281.7" y="1018.2" width="1.2" height="5.8" fill="#4a4a4a"/><rect x="1284.8" y="1018.2" width="1.2" height="5.8" fill="#4a4a4a"/><rect x="1288.0" y="1018.2" width="1.2" height="5.8" fill="#4a4a4a"/><rect x="1291.1" y="1018.2" width="7.3" height="5.8" fill="#3c3c3c"/><rect x="1304.7" y="1018.2" width="4.2" height="5.8" fill="#3c3c3c"/><rect x="1314.0" y="1018.2" width="6.3" height="5.8" fill="#3c3c3c"/><rect x="1322.4" y="1018.2" width="1.2" height="5.8" fill="#4a4a4a"/><rect x="1325.5" y="1018.2" width="1.2" height="5.8" fill="#4a4a4a"/><rect x="1331.8" y="1018.2" width="1.2" height="5.8" fill="#4a4a4a"/><rect x="1355.7" y="1018.2" width="5.2" height="5.8" fill="#3c3c3c"/><rect x="1364.1" y="1018.2" width="1.2" height="5.8" fill="#4a4a4a"/><rect x="1367.2" y="1018.2" width="1.2" height="5.8" fill="#4a4a4a"/><rect x="1370.3" y="1018.2" width="1.2" height="5.8" fill="#4a4a4a"/><rect x="1373.5" y="1018.2" width="1.2" height="5.8" fill="#4a4a4a"/><rect x="1394.3" y="1018.2" width="1.2" height="5.8" fill="#4a4a4a"/><rect x="1398.5" y="1018.2" width="1.2" height="5.8" fill="#4a4a4a"/><rect x="1402.7" y="1018.2" width="1.2" height="5.8" fill="#4a4a4a"/><rect x="1406.8" y="1018.2" width="1.2" height="5.8" fill="#4a4a4a"/><rect x="1413.1" y="1018.2" width="2.1" height="5.8" fill="#3c3c3c"/><rect x="1423.5" y="1018.2" width="1.2" height="5.8" fill="#4a4a4a"/><rect x="1426.7" y="1018.2" width="1.2" height="5.8" fill="#4a4a4a"/><rect x="1429.8" y="1018.2" width="1.2" height="5.8" fill="#4a4a4a"/><rect x="1432.9" y="1018.2" width="4.2" height="5.8" fill="#3c3c3c"/><rect x="1492.3" y="1018.2" width="1.2" height="5.8" fill="#484848"/><rect x="1517.4" y="1018.2" width="1.2" height="5.8" fill="#484848"/><rect x="1523.6" y="1018.2" width="1.2" height="5.8" fill="#484848"/><rect x="1547.6" y="1018.2" width="2.1" height="5.8" fill="#484848"/><rect x="1553.9" y="1018.2" width="1.2" height="5.8" fill="#484848"/><rect x="1559.1" y="1018.2" width="3.1" height="5.8" fill="#484848"/><rect x="1573.7" y="1018.2" width="2.1" height="5.8" fill="#484848"/><rect x="1581.0" y="1018.2" width="1.2" height="5.8" fill="#484848"/><rect x="1587.2" y="1018.2" width="2.1" height="5.8" fill="#484848"/><rect x="1609.1" y="1018.2" width="1.2" height="5.8" fill="#484848"/><rect x="1621.6" y="1018.2" width="3.1" height="5.8" fill="#484848"/><rect x="1491.8" y="1018.2" width="1.8" height="5.8" fill="#404040"/><rect x="1515.6" y="1018.2" width="2.5" height="5.8" fill="#404040"/><rect x="1521.8" y="1018.2" width="3.8" height="5.8" fill="#404040"/><rect x="1546.9" y="1018.2" width="2.5" height="5.8" fill="#404040"/><rect x="1553.1" y="1018.2" width="1.2" height="5.8" fill="#404040"/><rect x="1556.9" y="1018.2" width="3.8" height="5.8" fill="#404040"/><rect x="1574.4" y="1018.2" width="1.3" height="5.8" fill="#404040"/><rect x="1580.6" y="1018.2" width="2.5" height="5.8" fill="#404040"/><rect x="1586.9" y="1018.2" width="2.5" height="5.8" fill="#404040"/><rect x="1609.4" y="1018.2" width="1.2" height="5.8" fill="#404040"/><rect x="1621.9" y="1018.2" width="2.5" height="5.8" fill="#404040"/><rect x="1648.2" y="1018.2" width="2.0" height="5.8" fill="#404040"/><rect x="1675.7" y="1018.2" width="6.3" height="5.8" fill="#404040"/><rect x="1684.5" y="1018.2" width="2.5" height="5.8" fill="#404040"/><rect x="1710.3" y="1018.2" width="1.2" height="5.8" fill="#404040"/></g></svg>
</div>

</body></html>
